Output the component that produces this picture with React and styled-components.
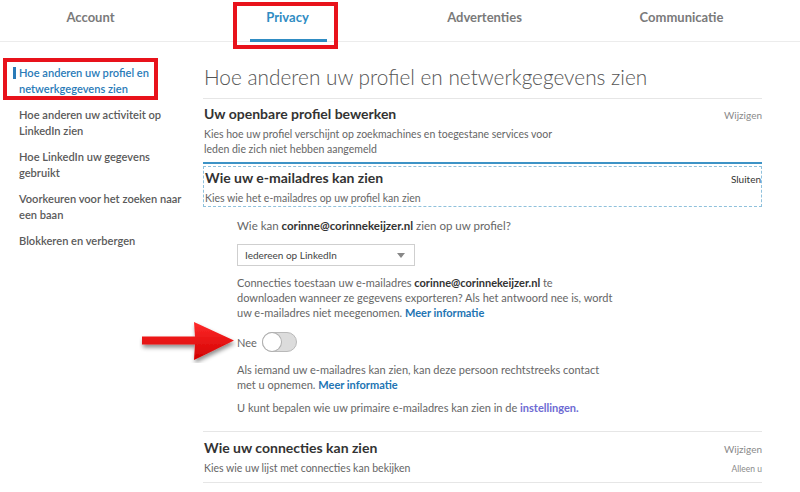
import React from 'react';
import styled, { createGlobalStyle } from 'styled-components';

const GlobalStyle = createGlobalStyle`
  body {
    margin: 0;
    background: #fff;
    font-family: Lato, "Open Sans", Arial, sans-serif;
    color: #555;
  }
`;

const BLUE = '#2a7bb8';
const RED = '#e8121b';

const tabs = ['Account', 'Privacy', 'Advertenties', 'Communicatie'];

const sideItems = [
  'Hoe anderen uw activiteit op LinkedIn zien',
  'Hoe LinkedIn uw gegevens gebruikt',
  'Voorkeuren voor het zoeken naar een baan',
  'Blokkeren en verbergen',
];

function App() {
  return (
    <Page>
      <GlobalStyle />
      <TopNav>
        <Tabs>
          {tabs.map(t => (
            <Tab key={t} active={t === 'Privacy'}>
              {t}
              {t === 'Privacy' && <Underline />}
              {t === 'Privacy' && <TabMarker />}
            </Tab>
          ))}
        </Tabs>
      </TopNav>

      <Body>
        <Sidebar>
          <NavItem active>
            <ActiveBar />
            Hoe anderen uw profiel en netwerkgegevens zien
            <NavMarker />
          </NavItem>
          {sideItems.map(item => (
            <NavItem key={item}>{item}</NavItem>
          ))}
        </Sidebar>

        <Main>
          <PageTitle>Hoe anderen uw profiel en netwerkgegevens zien</PageTitle>

          <Section>
            <SectionHead>
              <SectionTitle>Uw openbare profiel bewerken</SectionTitle>
              <Action>Wijzigen</Action>
            </SectionHead>
            <SectionDesc>
              Kies hoe uw profiel verschijnt op zoekmachines en toegestane services voor
              <br />
              leden die zich niet hebben aangemeld
            </SectionDesc>
          </Section>

          <OpenSection>
            <SectionHead>
              <SectionTitle>Wie uw e-mailadres kan zien</SectionTitle>
              <Action dark>Sluiten</Action>
            </SectionHead>
            <SectionDesc>Kies wie het e-mailadres op uw profiel kan zien</SectionDesc>
          </OpenSection>

          <Settings>
            <Question>
              Wie kan <b>corinne@corinnekeijzer.nl</b> zien op uw profiel?
            </Question>
            <Select>
              <span>Iedereen op LinkedIn</span>
              <Caret />
            </Select>
            <Paragraph>
              Connecties toestaan uw e-mailadres <b>corinne@corinnekeijzer.nl</b> te
              <br />
              downloaden wanneer ze gegevens exporteren? Als het antwoord nee is, wordt
              <br />
              uw e-mailadres niet meegenomen. <Link>Meer informatie</Link>
            </Paragraph>
            <ToggleRow>
              <PointerArrow viewBox="0 0 98 44" width="98" height="44">
                <defs>
                  <linearGradient id="redGrad" x1="0" y1="0" x2="0" y2="1">
                    <stop offset="0" stopColor="#ff2a2a" />
                    <stop offset="1" stopColor="#d10000" />
                  </linearGradient>
                  <filter id="arrowShadow" x="-20%" y="-20%" width="140%" height="160%">
                    <feDropShadow dx="1" dy="3" stdDeviation="2" floodColor="#000" floodOpacity="0.45" />
                  </filter>
                </defs>
                <path
                  d="M3 17.5 L56 17.5 L55 3 L95 21.5 L55 41 L56 25.5 L3 25.5 Z"
                  fill="url(#redGrad)"
                  filter="url(#arrowShadow)"
                />
              </PointerArrow>
              <span>Nee</span>
              <Switch />
            </ToggleRow>
            <Paragraph>
              Als iemand uw e-mailadres kan zien, kan deze persoon rechtstreeks contact
              <br />
              met u opnemen. <Link>Meer informatie</Link>
            </Paragraph>
            <Paragraph last>
              U kunt bepalen wie uw primaire e-mailadres kan zien in de{' '}
              <SettingsLink>instellingen.</SettingsLink>
            </Paragraph>
          </Settings>

          <Section bordered>
            <SectionHead>
              <SectionTitle>Wie uw connecties kan zien</SectionTitle>
              <Action>Wijzigen</Action>
            </SectionHead>
            <SectionHead>
              <SectionDesc>Kies wie uw lijst met connecties kan bekijken</SectionDesc>
              <Value>Alleen u</Value>
            </SectionHead>
          </Section>
        </Main>
      </Body>
    </Page>
  );
}

const Page = styled.div`
  width: 800px;
  height: 492px;
  overflow: hidden;
`;

const TopNav = styled.nav`
  height: 42px;
  border-bottom: 1px solid #ececec;
  box-sizing: border-box;
`;

const Tabs = styled.div`
  display: grid;
  grid-template-columns: repeat(4, 197px);
  margin-left: -8px;
  height: 100%;
`;

const Tab = styled.div`
  position: relative;
  display: flex;
  justify-content: center;
  padding-top: 9px;
  font-size: 13px;
  font-weight: 700;
  line-height: 16px;
  color: ${props => (props.active ? '#2f8cc3' : '#7a7a7a')};
`;

const Underline = styled.span`
  position: absolute;
  bottom: -1px;
  left: 50%;
  width: 77px;
  height: 3px;
  margin-left: -38px;
  background: #2f8cc3;
`;

const TabMarker = styled.span`
  position: absolute;
  top: 2px;
  left: 50%;
  width: 105px;
  height: 47px;
  margin-left: -55px;
  border: 4px solid ${RED};
  box-sizing: border-box;
`;

const Body = styled.div`
  display: flex;
  padding-left: 13px;
`;

const Sidebar = styled.aside`
  display: flex;
  flex-direction: column;
  gap: 10px;
  width: 190px;
  padding-top: 23px;
`;

const NavItem = styled.div`
  position: relative;
  padding-left: 6px;
  padding-right: 10px;
  font-size: 11.1px;
  font-weight: 600;
  line-height: 16px;
  color: ${props => (props.active ? BLUE : '#5a5a5a')};
`;

const ActiveBar = styled.span`
  position: absolute;
  left: 0;
  top: 2px;
  width: 3px;
  height: 12px;
  background: ${BLUE};
`;

const NavMarker = styled.span`
  position: absolute;
  top: -7px;
  left: -10px;
  width: 155px;
  height: 42px;
  border: 4px solid ${RED};
  box-sizing: border-box;
`;

const Main = styled.main`
  width: 559px;
  padding-top: 21px;
`;

const PageTitle = styled.h1`
  margin: 0;
  padding-bottom: 7px;
  border-bottom: 1px solid #e6e6e6;
  font-size: 20.8px;
  font-weight: 300;
  line-height: 28px;
  color: #555;
  padding-left: 1px;
`;

const Section = styled.section`
  padding: ${props => (props.bordered ? '6px 0 6px 1px' : '5px 0 5px 1px')};
  border-top: ${props => (props.bordered ? '1px solid #e6e6e6' : 'none')};
  border-bottom: ${props => (props.bordered ? '1px solid #e6e6e6' : '2px solid #3d93c6')};
`;

const OpenSection = styled.section`
  margin-top: 2px;
  padding: 1px 0 0 1px;
  border: 1px dashed #8fc1dc;
`;

const SectionHead = styled.div`
  display: flex;
  justify-content: space-between;
  align-items: baseline;
`;

const SectionTitle = styled.h2`
  margin: 0;
  font-size: 14px;
  font-weight: 700;
  line-height: 20px;
  color: #333;
`;

const Action = styled.span`
  font-size: 10px;
  color: ${props => (props.dark ? '#333' : '#8a8a8a')};
`;

const Value = styled.span`
  font-size: 8.5px;
  color: #8a8a8a;
`;

const SectionDesc = styled.p`
  margin: 3px 0 0;
  font-size: 10.5px;
  line-height: 15px;
  color: #666;
`;

const Settings = styled.div`
  padding: 11px 0 6px 34px;
  color: #666;

  b {
    color: #333;
    font-weight: 700;
  }
`;

const Question = styled.p`
  margin: 0;
  font-size: 11.5px;
  line-height: 16px;
`;

const Select = styled.div`
  display: flex;
  justify-content: space-between;
  align-items: center;
  width: 178px;
  height: 22px;
  margin: 10px 0 9px;
  padding: 0 9px 0 7px;
  box-sizing: border-box;
  border: 1px solid #cfcfcf;
  font-size: 10px;
  color: #444;
`;

const Caret = styled.span`
  width: 0;
  height: 0;
  border-left: 4px solid transparent;
  border-right: 4px solid transparent;
  border-top: 5px solid #888;
`;

const Paragraph = styled.p`
  width: 400px;
  margin: 0 0 ${props => (props.last ? '10px' : '8px')};
  font-size: 11px;
  line-height: 15px;
`;

const Link = styled.span`
  color: #2274b3;
  font-weight: 700;
`;

const SettingsLink = styled.span`
  color: #6d6ad3;
  font-weight: 700;
`;

const ToggleRow = styled.div`
  position: relative;
  display: flex;
  align-items: center;
  gap: 5px;
  margin: 12px 0 10px;
  font-size: 11px;
`;

const PointerArrow = styled.svg`
  position: absolute;
  left: -98px;
  top: -13px;
`;

const Switch = styled.span`
  position: relative;
  width: 35px;
  height: 20px;
  box-sizing: border-box;
  border: 1px solid #b9b9b9;
  border-radius: 10px;
  background: #dcdcdc;

  &::after {
    content: '';
    position: absolute;
    left: 0;
    top: 0;
    width: 18px;
    height: 18px;
    border-radius: 50%;
    background: #fff;
    box-shadow: 0 0 0 1px #b0b0b0;
  }
`;

export default App;
